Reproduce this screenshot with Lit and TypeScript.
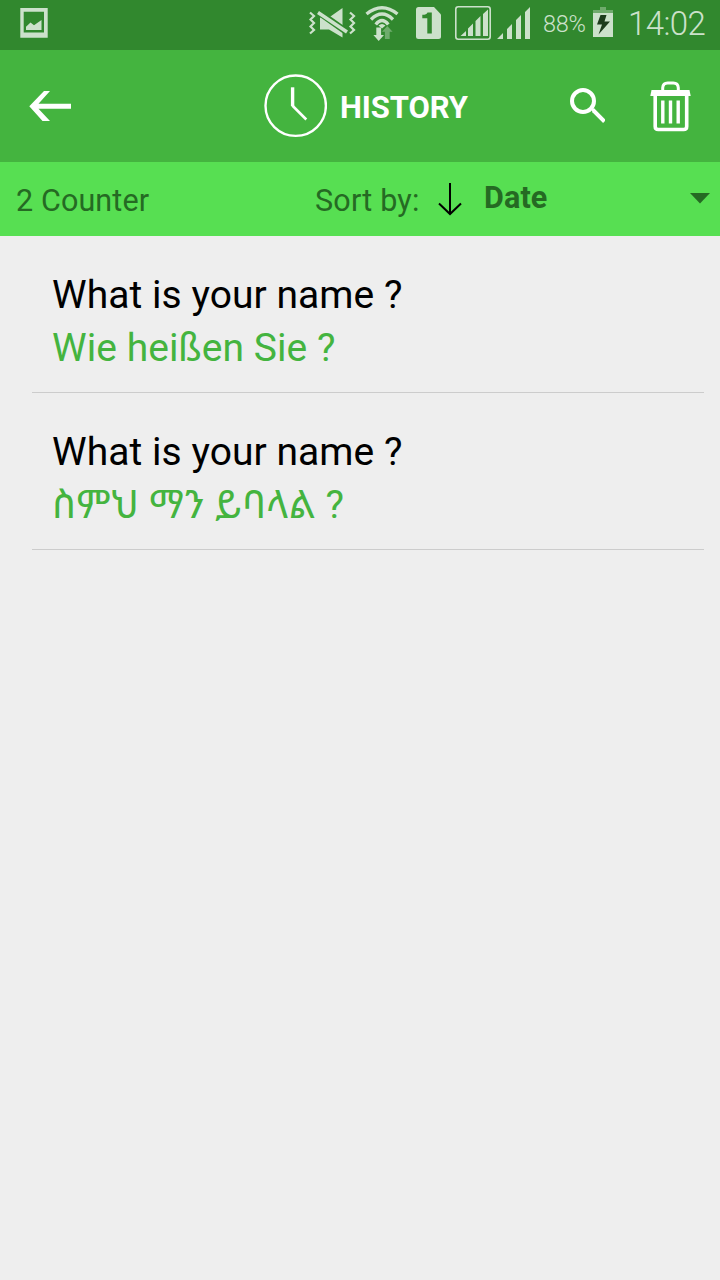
import { LitElement, html, css } from "lit";
import { customElement, property } from "lit/decorators.js";

interface Entry {
  source: string;
  target: string;
  ethiopic?: boolean;
}

@customElement("status-bar")
class StatusBar extends LitElement {
  static styles = css`
    :host {
      display: flex;
      align-items: flex-start;
      height: 50px;
      background: #31882e;
      color: #cce1cb;
      fill: #cce1cb;
      box-sizing: border-box;
      padding: 0 14px 0 20px;
      white-space: nowrap;
    }
    svg { display: block; flex: none; height: 50px; }
    .space { flex: 1; }
    .wifi { margin-left: 9px; }
    .sim { margin-left: 17px; }
    .boxed { margin-left: 14px; }
    .signal { margin-left: 6px; }
    .percent { width: 50px; margin-left: 13px; font-size: 23.500px; line-height: 28px; padding-top: 10px; letter-spacing: -0.3px; font-weight: 350; }
    .time { width: 78px; margin-left: 15px; font-size: 33px; line-height: 38px; padding-top: 5px; letter-spacing: -0.6px; font-weight: 340; }
  `;
  render() {
    return html`
      <svg width="28" viewBox="20 0 28 50">
        <path fill-rule="evenodd" d="M20.3 8h27.4v29.700H20.300zM23.700 11.800v20.700H44V11.800z" />
        <path d="M26 30v-3.300l4.500-4.200 3.500 2.800 7.500-5.300v10z" />
      </svg>
      <div class="space"></div>
      <svg width="47" viewBox="309 0 47 50">
        <path d="M320 17.500h9l13.500-9.500v29.500L329 29.500h-9z" />
        <path d="M318.500 12l29 20.500" stroke="#31882e" stroke-width="6.500" />
        <path d="M318 12.500l29 19.500" stroke="#cce1cb" stroke-width="3.500" fill="none" />
        <path d="M310 12.500l4 3.500-3.500 3.500 3.500 3.500-3.500 3.500 3.500 3.500-4 3.500M350 12.500l4 3.500-3.500 3.500 3.500 3.500-3.500 3.500 3.500 3.500-4 3.500" fill="none" stroke="#cce1cb" stroke-width="2.200" />
      </svg>
      <svg class="wifi" width="34" viewBox="365 0 34 50">
        <g fill="none" stroke="#cce1cb" stroke-width="3.300">
          <path d="M366.500 14q15.500-12.500 31 0M371 19.500q11-11 22 0M375.700 24.500q6.300-8 12.600 0" />
        </g>
        <path d="M378.500 25.500q3.500-3 7 0l-3.500 3z" />
        <path d="M376.300 27.500h4.800v7.500h2.900l-5.300 6-5.300-6h2.900z" />
        <path fill="#6fac6d" d="M384.900 39v-7.300H382l5.300-5.700 5.300 5.700h-2.900V39z" />
      </svg>
      <svg class="sim" width="25" viewBox="416 0 25 50">
        <path d="M418.500 7H434l7 7.500V36.500q0 2.500-2.500 2.500h-20q-2.500 0-2.500-2.500v-27q0-2.500 2.500-2.500z" />
        <path fill="#31882e" d="M427.500 12.500h4.300v21h-4.500V18.200h-5v-3.400q4.500 0 5.200-2.300z" />
      </svg>
      <svg class="boxed" width="36" viewBox="455 0 36 50">
        <rect x="455.800" y="6.800" width="34.400" height="32.400" rx="2.500" fill="none" stroke="#cce1cb" stroke-width="1.600" />
        <path d="M460.500 36l5.500-5v5zM468 28.500l5-5V36h-5zM475.500 21l5-5V36h-5zM483 14l5-4.500V36h-5z" />
      </svg>
      <svg class="signal" width="33" viewBox="497 0 33 50">
        <path d="M497 39l6-6v6zM507 29l5-5v15h-5zM516 20l5-5v24h-5zM525 12l5-5v32h-5z" />
      </svg>
      <div class="percent">88%</div>
      <svg width="20" viewBox="593 0 20 50">
        <path opacity=".4" d="M600 7h6v3h7v3h-20v-3h7z" />
        <path d="M593 13h20v24h-20z" />
        <path fill="#1d3b1c" d="M600.500 15h6l-2 6.500h5.500l-11.500 13 3.500-10h-5z" />
      </svg>
      <div class="time">14:02</div>
    `;
  }
}

@customElement("title-bar")
class TitleBar extends LitElement {
  static styles = css`
    :host {
      display: flex;
      align-items: flex-start;
      height: 112px;
      background: #44b43f;
      color: #fff;
      box-sizing: border-box;
      padding: 0 28px 0 29px;
    }
    svg { display: block; flex: none; height: 112px; fill: none; stroke: #fff; }
    .clock { margin-left: 193px; }
    h1 { margin: 0 0 0 13px; width: 229px; padding-top: 40px; font-size: 31px; line-height: 36px; font-weight: 700; letter-spacing: -0.1px; }
    .trash { margin-left: 45px; }
  `;
  render() {
    return html`
      <svg width="42" viewBox="29 50 42 112">
        <path fill="#fff" stroke="none" d="M29.300 106.200L44 91h6L38.500 103.800H71v5H38.500L50 121h-7.500z" />
      </svg>
      <svg class="clock" width="63" viewBox="264 50 63 112">
        <circle cx="295.700" cy="105.700" r="30.200" stroke-width="2.400" />
        <path d="M292.600 87.300V106" stroke-width="3.400" />
        <path d="M292.300 105.500l14 14" stroke-width="2.600" />
      </svg>
      <h1>HISTORY</h1>
      <svg width="36" viewBox="569 50 36 112">
        <circle cx="583" cy="101" r="11" stroke-width="4" />
        <path d="M592 110.800l1.500-.3 11 11" stroke-width="4" />
      </svg>
      <svg class="trash" width="42" viewBox="650 50 42 112">
        <path fill="#fff" stroke="none" d="M651.500 90h38l1.200 6h-40.400z" />
        <path d="M662.700 91v-3.200q.3-4.900 5-4.900h5.600q4.700 0 5 4.900V91" stroke-width="3" />
        <path d="M655.200 95v31.500q0 3 3 3h25.500q3 0 3-3V95" stroke-width="3.600" />
        <path d="M662.800 100.500v23M670.500 100.500v23M678.200 100.500v23" stroke-width="3.400" />
      </svg>
    `;
  }
}

@customElement("sort-bar")
class SortBar extends LitElement {
  @property({ type: Number }) count = 0;
  static styles = css`
    :host {
      display: flex;
      align-items: flex-start;
      height: 74px;
      background: #57df52;
      color: #256a23;
      box-sizing: border-box;
      padding: 0 10px 0 16px;
      font-size: 30.500px;
      line-height: 36px;
      letter-spacing: 0.12px;
      white-space: nowrap;
    }
    .count { width: 299px; padding-top: 21px; }
    .label { width: 123px; padding-top: 21px; letter-spacing: 0.2px; }
    .value { width: 206px; margin-left: 22px; padding-top: 18px; font-weight: 700; }
    svg { display: block; flex: none; height: 74px; }
  `;
  render() {
    return html`
      <div class="count">${this.count} Counter</div>
      <div class="label">Sort by:</div>
      <svg width="24" viewBox="438 162 24 74">
        <path fill="none" stroke="#000" stroke-width="2" d="M450 183v31M439 203.500l11 10.500 11-10.500" />
      </svg>
      <div class="value">Date</div>
      <svg width="20" viewBox="690 162 20 74"><path fill="#256a23" d="M690 193h20l-10 10.500z" /></svg>
    `;
  }
}

@customElement("history-item")
class HistoryItem extends LitElement {
  @property({ attribute: false }) entry!: Entry;
  static styles = css`
    :host {
      display: block;
      height: 157px;
      box-sizing: border-box;
      margin: 0 16px 0 32px;
      padding: 33px 0 0 20px;
      border-bottom: 1px solid #cccccc;
      font-size: 39px;
      line-height: 53px;
      letter-spacing: 0.05px;
      white-space: nowrap;
    }
    .source { color: #000; }
    .target { color: #44b43f; }
    .ethiopic { letter-spacing: 0.4px; }
  `;
  render() {
    return html`
      <div class="source">${this.entry.source}</div>
      <div class="target ${this.entry.ethiopic ? "ethiopic" : ""}">${this.entry.target}</div>
    `;
  }
}

@customElement("app-root")
class AppRoot extends LitElement {
  static styles = css`
    :host {
      display: block;
      min-height: 1280px;
      background: #eeeeee;
      font-family: Roboto, "Noto Sans Ethiopic", "Noto Sans", "DejaVu Sans", sans-serif;
    }
  `;
  private entries: Entry[] = [
    { source: "What is your name ?", target: "Wie heißen Sie ?" },
    { source: "What is your name ?", target: "ስምህ ማን ይባላል ?", ethiopic: true },
  ];
  render() {
    return html`
      <status-bar></status-bar>
      <title-bar></title-bar>
      <sort-bar .count=${this.entries.length}></sort-bar>
      <main>${this.entries.map((e) => html`<history-item .entry=${e}></history-item>`)}</main>
    `;
  }
}
